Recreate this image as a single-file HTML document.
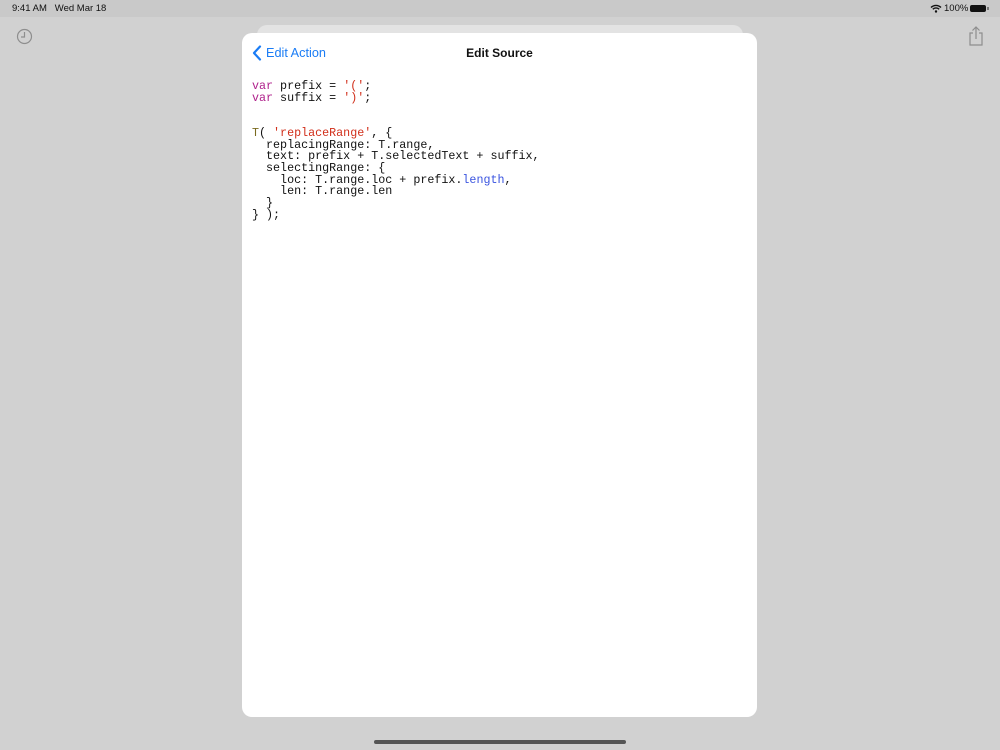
<!DOCTYPE html>
<html><head><meta charset="utf-8"><style>
body{margin:0;width:1000px;height:750px;background:#d1d1d1;position:relative;overflow:hidden;font-family:"Liberation Sans",sans-serif}
.sb{position:absolute;top:0;left:0;width:1000px;height:17px;background:#c9c9c9;font-size:9.5px;color:#111}
.back2{position:absolute;left:257px;top:25px;width:486px;height:40px;background:#e3e3e3;border-radius:10px}
.sheet{position:absolute;left:242px;top:33px;width:515px;height:684px;background:#fff;border-radius:10px}
pre{position:absolute;left:10px;top:48px;margin:0;font-family:"Liberation Mono",monospace;font-size:11.7px;line-height:11.7px;color:#111}
.k{color:#b0228c}.s{color:#d12f1b}.f{color:#7a6a1e}.p{color:#3b55e0}
</style></head><body>
<div class="sb"><span style="position:absolute;left:12px;top:3px">9:41 AM&nbsp;&nbsp;&nbsp;Wed Mar 18</span>
<svg style="position:absolute;left:930px;top:4px" width="12" height="9" viewBox="0 0 12 9"><path d="M1 3.5a7 7 0 0 1 10 0M2.8 5.3a4.5 4.5 0 0 1 6.4 0" stroke="#111" stroke-width="1.4" fill="none"/><circle cx="6" cy="7.5" r="1.2" fill="#111"/></svg>
<span style="position:absolute;left:944px;top:3px">100%</span>
<div style="position:absolute;left:970px;top:5px;width:16px;height:7px;background:#111;border-radius:2px"></div>
<div style="position:absolute;left:987px;top:7px;width:1.5px;height:3px;background:#777"></div></div>
<svg style="position:absolute;left:16px;top:28px" width="17" height="17" viewBox="0 0 17 17"><circle cx="8.5" cy="8.5" r="7" stroke="#8e8e8e" stroke-width="1.2" fill="none"/><path d="M8.5 4v5H5" stroke="#8e8e8e" stroke-width="1.2" fill="none"/></svg>
<svg style="position:absolute;left:967px;top:26px" width="18" height="20" viewBox="0 0 18 20"><path d="M6 7H3v12h12V7h-3M9 13V1M5.5 4.5 9 1l3.5 3.5" stroke="#8e8e8e" stroke-width="1.2" fill="none"/></svg>
<div class="back2"></div>
<div class="sheet">
<svg style="position:absolute;left:10px;top:12px" width="10" height="16" viewBox="0 0 10 16"><path d="M8 1.5 2 8l6 6.5" stroke="#1a7cf5" stroke-width="2.2" fill="none" stroke-linecap="round" stroke-linejoin="round"/></svg>
<div style="position:absolute;left:24px;top:13px;font-size:12.7px;color:#1a7cf5">Edit Action</div>
<div style="position:absolute;left:0;width:515px;top:13px;text-align:center;font-size:12px;font-weight:bold;color:#111">Edit Source</div>
<pre><span class="k">var</span> prefix = <span class="s">'('</span>;
<span class="k">var</span> suffix = <span class="s">')'</span>;


<span class="f">T</span>( <span class="s">'replaceRange'</span>, {
  replacingRange: T.range,
  text: prefix + T.selectedText + suffix,
  selectingRange: {
    loc: T.range.loc + prefix.<span class="p">length</span>,
    len: T.range.len
  }
} );</pre>
</div>
<div style="position:absolute;left:374px;top:740px;width:252px;height:4px;border-radius:2px;background:#555"></div>
</body></html>
